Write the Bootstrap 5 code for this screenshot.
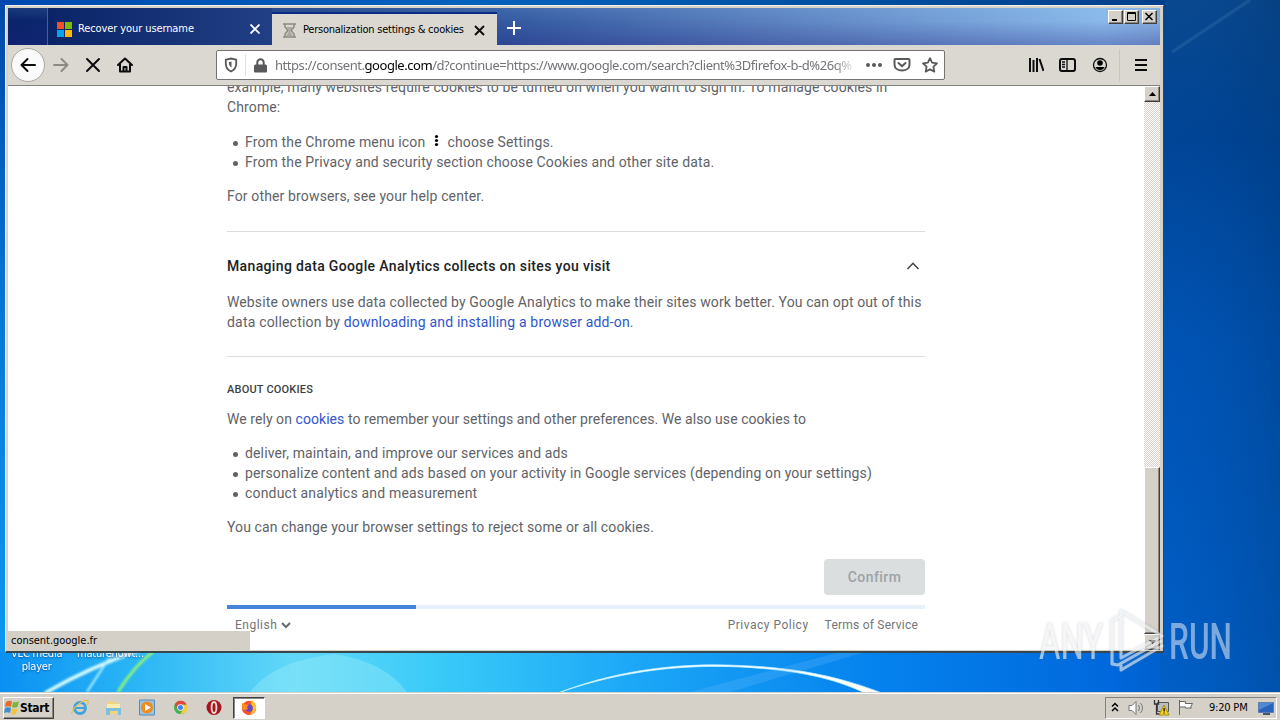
<!DOCTYPE html>
<html lang="en">
<head>
<meta charset="utf-8">
<meta name="viewport" content="width=device-width, initial-scale=1">
<title>Personalization settings &amp; cookies</title>
<link href="https://cdn.jsdelivr.net/npm/bootstrap@5.3.0/dist/css/bootstrap.min.css" rel="stylesheet">
<style>
html,body{height:100%}
body{width:1280px;height:720px;font-family:"DejaVu Sans Condensed","DejaVu Sans",sans-serif;font-size:11px;line-height:14px;color:#000;background:#0058c0}
svg{display:block;flex:none}
.desk{height:720px;padding:5px 0 0 5px}
.wall{left:0;top:0}
.win{width:1159px;height:648px;padding:2px 3px 3px 2px;border:1px solid #f4f2ea;border-right-color:#404040;border-bottom:2px solid #38474d;background:#d6d2c6}
.tabs{height:37px;background:linear-gradient(180deg,rgba(140,210,255,.12),rgba(120,170,230,0) 35%,rgba(30,30,125,.32)),linear-gradient(90deg,#0a246a 0,#12307a 15%,#2f549c 40%,#5a80be 65%,#8ab8ea 95%,#84acdf)}
.tab{height:37px;padding-top:5px}
.t1{width:225px;margin-left:39px;border-left:1px solid #4a5f98;padding-left:9px;color:#fff;background:linear-gradient(90deg,#0b2468,#213f85)}
.t2{width:225px;height:33px;margin-top:4px;border-top:2px solid #0a2a86;background:#dbd8d2;padding:1px 12px 0 11px}
.tabname{margin-left:6px;letter-spacing:-.1px}
.tabname2{margin-left:7px;letter-spacing:-.24px}
.wbtns{padding:2px 3px 0 0}
.bar{height:41px;background:#dbd8d2;border-bottom:1px solid #84827e;padding-left:3px}
.back{width:34px;height:34px;border:1px solid #a9a7a3;border-radius:50%;background:#fafafa}
.url{width:729px;height:30px;border:1px solid #75736f;background:#fff;border-radius:2px;font-family:"Noto Sans",sans-serif;font-size:13px;color:#737378}
.url b{font-weight:400;color:#000}
.url .addr{width:582px;line-height:22px;letter-spacing:-.45px;-webkit-mask-image:linear-gradient(90deg,#000 96%,transparent);mask-image:linear-gradient(90deg,#000 96%,transparent)}
.view{height:564px;background:#fff}
.doc{width:698px;margin-left:219px;font-family:Roboto,sans-serif;font-size:14px;line-height:20px;color:#5f6368;letter-spacing:.14px}
.doc p,.doc ul,.doc h2,.doc h3{margin:0;white-space:nowrap}
.doc ul{padding-left:18px;list-style:none;margin:15px 0 14px}
.doc li::before{content:"";position:absolute;width:5px;height:5px;border-radius:50%;background:#5f6368;margin:9px 0 0 -12px}
.doc a{color:#2f55cc;text-decoration:none}
.doc .ls-s{letter-spacing:.06px}
.doc .ls-m{letter-spacing:.12px}
.doc .ls-l{letter-spacing:.19px}
.rule{height:1px;background:#dadce0}
.doc h2{font-size:14px;line-height:20px;font-weight:500;color:#202124;letter-spacing:.35px}
.doc h3{font-size:11px;line-height:20px;font-weight:500;color:#3c4043;letter-spacing:.2px}
.doc .okay{width:101px;height:36px;border-radius:4px;border:0;background:#dadedf;color:#9da2a6;font-size:14px;font-weight:500;letter-spacing:.45px;padding:0;opacity:1}
.meter{height:4px;background:#e8f0fb;border-radius:0}
.foot{font-size:12px;letter-spacing:.5px;color:#757575;height:20px;margin-top:6px;padding:0 7px 0 8px}
.foot .tos{letter-spacing:.23px}
.sbar{width:16px;background:repeating-conic-gradient(#d4d0c8 0 25%,#fff 0 50%) 0 0/2px 2px}
.raised{background:#d5d1c9;border:1px solid #fff;border-right-color:#404040;border-bottom-color:#404040;box-shadow:inset -1px -1px 0 #8a8880}
.thumb{height:167px}
.ctl{width:15px;height:14px}
.status{left:8px;top:631px;width:242px;height:19px;background:#d4d0c8;padding:3px 0 0 3px;letter-spacing:-.03px}
.dlabel{color:#fff;top:647px;text-align:center;line-height:13px;letter-spacing:-.2px;text-shadow:0 1px 2px #0050a0}
.task{left:0;top:692px;width:1280px;height:28px;background:#d5d1c9;border-top:1px solid #d5d1c9;box-shadow:inset 0 1px 0 #fff;padding:3px 3px 1px}
.start{width:51px;height:22px;font-weight:700;font-size:12px;letter-spacing:-.35px}
.active-app{width:32px;height:22px;background:#fff;border:1px solid #404040;border-right-color:#fff;border-bottom-color:#fff;box-shadow:inset 1px 1px #888}
.tray{width:172px;height:22px;border:1px solid #84827e;border-right-color:#fff;border-bottom-color:#fff;letter-spacing:-.2px}
.wm{left:1030px;top:600px;z-index:5}
</style>
</head>
<body class="overflow-hidden">
<div class="desk position-relative">
<svg class="wall position-absolute" width="1280" height="720" viewBox="0 0 1280 720">
<defs>
<linearGradient id="h"><stop offset="0" stop-color="#0a90f2"/><stop offset=".1" stop-color="#28b4f5"/><stop offset=".23" stop-color="#62d8f8"/><stop offset=".34" stop-color="#3acbf8"/><stop offset=".5" stop-color="#1ba6f7"/><stop offset=".68" stop-color="#0583ee"/><stop offset=".87" stop-color="#0068dc"/><stop offset="1" stop-color="#004daa"/></linearGradient>
<linearGradient id="r" x2="0" y2="1"><stop offset="0" stop-color="#0b4585"/><stop offset=".2" stop-color="#00418f"/><stop offset=".5" stop-color="#0053b3"/><stop offset="1" stop-color="#0060c8"/></linearGradient>
<linearGradient id="rd"><stop offset="0" stop-color="#0058c0" stop-opacity=".15"/><stop offset="1" stop-color="#003c80" stop-opacity=".4"/></linearGradient>
<linearGradient id="l" x2="0" y2="1"><stop offset="0" stop-color="#0048a8"/><stop offset=".5" stop-color="#0878d8"/><stop offset="1" stop-color="#0a98f4"/></linearGradient>
<linearGradient id="t"><stop offset="0" stop-color="#0048b0"/><stop offset=".4" stop-color="#0562bd"/><stop offset="1" stop-color="#003f8a"/></linearGradient>
<filter id="soft"><feGaussianBlur stdDeviation="1.2"/></filter>
<filter id="soft2"><feGaussianBlur stdDeviation=".6"/></filter>
</defs>
<rect y="640" width="1280" height="80" fill="url(#h)"/>
<rect x="1160" width="120" height="692" fill="url(#r)"/><rect x="1160" width="120" height="692" fill="url(#rd)"/>
<rect width="6" height="652" fill="url(#l)"/><rect width="1165" height="6" fill="url(#t)"/>
<path d="M250 692Q275 660 335 654Q385 662 407 692Z" fill="#a4f0fa" opacity=".35"/>
<g fill="none" filter="url(#soft)"><path d="M45 693Q90 667 140 650" stroke="#d8fbff" stroke-width="3.500"/><path d="M87 692L113 652" stroke="#b8f4ff" stroke-width="2"/><path d="M118 692Q134 666 155 650" stroke="#8df27c" stroke-width="3"/><path d="M1172 52L1250 0" stroke="#4f86b8" stroke-width="2" opacity=".5"/></g>
<path d="M558 693C625 667 690 663 740 665.500C805 668 845 679 882 693L865 693C835 679 800 670 740 667C690 664.500 625 669 558 693Z" fill="#fff" stroke="#bdf0ff" stroke-width=".7" filter="url(#soft2)"/>
<path d="M690 692L840 652H865L730 692Z" fill="#7fc5ff" opacity=".2"/>
</svg>
<div class="dlabel position-absolute" style="left:11px">VLC media<br>player</div>
<div class="dlabel position-absolute" style="left:77px">maturehowt...</div>

<div class="win position-relative">
<div class="tabs d-flex">
<div class="tab t1 d-flex align-items-center">
<svg width="15" height="15" viewBox="0 0 15 15"><path fill="#f25022" d="M0 0h7v7H0z"/><path fill="#7fba00" d="M8 0h7v7H8z"/><path fill="#00a4ef" d="M0 8h7v7H0z"/><path fill="#ffb900" d="M8 8h7v7H8z"/></svg>
<span class="text-nowrap tabname">Recover your username</span>
<svg class="ms-auto" style="margin-right:12px" width="10" height="10" stroke="#fff" stroke-width="1.800"><path d="M.5 .5l9 9m0-9l-9 9"/></svg>
</div>
<div class="tab t2 d-flex align-items-center">
<svg width="13" height="15" viewBox="0 0 13 15" fill="none" stroke="#8b8985" stroke-width="1.500"><path d="M0 1h13M0 14h13M2 1v3l3 3.500L2 11v3M11 1v3L8 7.500 11 11v3"/><path d="M3 4h7L7.500 7v2l2.500 4H3l2.500-4V7z" fill="#aaa8a4" stroke="none"/></svg>
<span class="text-nowrap tabname2">Personalization settings &amp; cookies</span>
<svg class="ms-auto" width="11" height="11" stroke="#111" stroke-width="2"><path d="M1 1l9 9m0-9l-9 9"/></svg>
</div>
<svg class="mt-2 ms-1" width="28" height="25" stroke="#fff" stroke-width="2"><path d="M13 5v14M6 12h14"/></svg>
<div class="d-flex ms-auto wbtns">
<div class="raised ctl"><svg width="13" height="12"><path d="M3 8h5v2H3z"/></svg></div>
<div class="raised ctl" style="margin-left:1px"><svg width="13" height="12" fill="none" stroke="#000"><path d="M2.500 1.500h8v8h-8zM2 2.500h9"/></svg></div>
<div class="raised ctl" style="margin-left:3px"><svg width="13" height="12" stroke="#000" stroke-width="1.500"><path d="M2.500 2l7 7m0-7l-7 7"/></svg></div>
</div>
</div>
<div class="bar d-flex align-items-center">
<div class="back d-flex align-items-center justify-content-center"><svg width="16" height="16" fill="none" stroke="#0c0c0d" stroke-width="2" stroke-linecap="round" stroke-linejoin="round"><path d="M15 8H1.500M7.500 2l-6 6 6 6"/></svg></div>
<svg class="ms-2" width="16" height="16" fill="none" stroke="#8c8a87" stroke-width="2" stroke-linecap="round" stroke-linejoin="round"><path d="M1 8h13.500M8.500 2l6 6-6 6"/></svg>
<svg class="ms-3" width="16" height="16" stroke="#0c0c0d" stroke-width="2" stroke-linecap="round"><path d="M2 2l12 12m0-12L2 14"/></svg>
<svg class="ms-3" width="16" height="16" fill="none" stroke="#0c0c0d" stroke-width="2" stroke-linecap="round" stroke-linejoin="round"><path d="M1 8l7-6.500L15 8M3 7v7.500h10V7"/><path d="M6.500 14v-4h3v4" /></svg>
<div class="url d-flex align-items-center" style="margin-left:83px">
<svg style="margin-left:7px" width="14" height="16" fill="none" stroke="#59595c" stroke-width="1.800"><path d="M7 1.500l5.200 1.200v4C12.200 10.500 10 13 7 14.500 4 13 1.800 10.500 1.800 6.700v-4z"/><path d="M7.500 4.500v6C5.500 9 4.800 7.500 4.800 5.200z" fill="#59595c" stroke="none"/></svg>
<div class="border-start" style="height:22px;margin:0 8px 0 7px"></div>
<svg width="13" height="15" fill="#59595c"><path d="M0 8a1.500 1.500 0 011.500-1.500h10A1.500 1.500 0 0113 8v5.500a1 1 0 01-1 1H1a1 1 0 01-1-1z"/><path d="M3.300 8V4.500a3.200 3.200 0 016.400 0V8" fill="none" stroke="#59595c" stroke-width="2"/></svg>
<div class="addr overflow-hidden text-nowrap" style="margin-left:8px">https://consent.<b>google.com</b>/d?continue=https://www.google.com/search?client%3Dfirefox-b-d%26q%</div>
<svg style="margin-left:8px" width="18" height="6" fill="#59595c"><circle cx="3" cy="3" r="2"/><circle cx="9" cy="3" r="2"/><circle cx="15" cy="3" r="2"/></svg>
<svg style="margin-left:10px" width="18" height="16" fill="none" stroke="#59595c" stroke-width="2" stroke-linecap="round" stroke-linejoin="round"><path d="M2.500 2h13Q16.500 2 16.500 3v4.500c0 8-15 8-15 0V3q0-1 1-1z"/><path d="M5.500 6L9 9.300 12.500 6"/></svg>
<svg style="margin-left:11px" width="16" height="16" fill="none" stroke="#59595c" stroke-width="1.800" stroke-linejoin="round"><path d="M8 1.200l2.100 4.500 4.900.6-3.600 3.400.9 4.900L8 12.200l-4.300 2.400.9-4.900L1 6.300l4.900-.6z"/></svg>
</div>
<svg style="margin-left:83px" width="16" height="14" stroke="#0c0c0d" stroke-width="2"><path d="M2 0v14M5.500 2v12M9 0v14M11.500 1l4 12"/></svg>
<svg style="margin-left:15px" width="17" height="14" fill="none" stroke="#0c0c0d" stroke-width="2"><rect x="1" y="1" width="15" height="12" rx="2"/><path d="M8 1v12M3 4h3M3 6.500h3M3 9h3" stroke-width="1.300"/></svg>
<svg style="margin-left:16px" width="16" height="16" viewBox="0 0 16 16"><circle cx="8" cy="8" r="6.500" fill="none" stroke="#0c0c0d" stroke-width="1.300"/><circle cx="8" cy="6" r="2.800"/><path d="M3.500 10h9q-1 3-4.500 3T3.500 10z"/></svg>
<div style="margin-left:11px;width:1px;height:33px;background:#c9c6c0"></div>
<svg style="margin-left:15px" width="12" height="12" stroke="#0c0c0d" stroke-width="2"><path d="M0 1h12M0 6h12M0 11h12"/></svg>
</div>
<div class="view d-flex overflow-hidden">
<div class="doc">
<p style="margin-top:-9px" class="ls-m">example, many websites require cookies to be turned on when you want to sign in. To manage cookies in</p>
<p class="ls-m">Chrome:</p>
<ul><li>From the Chrome menu icon <svg class="d-inline-block align-baseline mx-1" width="7" height="13"><circle cx="3.500" cy="2.500" r="1.600"/><circle cx="3.500" cy="6.500" r="1.600"/><circle cx="3.500" cy="10.500" r="1.600"/></svg> choose Settings.</li><li>From the Privacy and security section choose Cookies and other site data.</li></ul>
<p>For other browsers, see your help center.</p>
<div class="rule" style="margin-top:25px"></div>
<div class="d-flex justify-content-between align-items-center mt-4"><h2>Managing data Google Analytics collects on sites you visit</h2><svg class="me-1" width="16" height="10" fill="none" stroke="#444746" stroke-width="1.600"><path d="M2.500 8L8 2.300 13.500 8"/></svg></div>
<p class="mt-3 ls-m">Website owners use data collected by Google Analytics to make their sites work better. You can opt out of this</p>
<p class="ls-l">data collection by <a href="#">downloading and installing a browser add-on</a>.</p>
<div class="rule mt-4"></div>
<h3 style="margin-top:23px">ABOUT COOKIES</h3>
<p style="margin-top:9px" class="ls-s">We rely on <a href="#">cookies</a> to remember your settings and other preferences. We also use cookies to</p>
<ul style="margin-top:14px"><li>deliver, maintain, and improve our services and ads</li><li>personalize content and ads based on your activity in Google services (depending on your settings)</li><li class="ls-l">conduct analytics and measurement</li></ul>
<p class="ls-m">You can change your browser settings to reject some or all cookies.</p>
<div class="d-flex justify-content-end" style="margin-top:22px"><button class="btn okay" disabled>Confirm</button></div>
<div class="meter" style="margin-top:10px"><div class="h-100" style="width:27.100%;background:#4586dc"></div></div>
<div class="foot d-flex align-items-center"><span>English</span><svg class="ms-1" width="10" height="8" fill="none" stroke="#66696c" stroke-width="2"><path d="M1 2l4 4 4-4"/></svg><span class="ms-auto">Privacy Policy</span><span class="ms-3 tos">Terms of Service</span></div>
</div>
<div class="sbar d-flex flex-column ms-auto">
<div class="raised" style="height:16px"><svg width="14" height="14"><path d="M4 9h7L7.500 5z"/></svg></div>
<div class="raised thumb mt-auto"></div>
<div class="raised" style="height:16px"><svg width="14" height="14"><path d="M4 5h7L7.500 9z"/></svg></div>
</div>
</div>
</div>
<div class="status position-absolute">consent.google.fr</div>
<div class="task position-absolute d-flex align-items-center">
<div class="raised start d-flex align-items-center"><svg width="16" height="17"><path d="M2 3q3-2 6-.5L7 8Q4 6.500 1 8z" fill="#e66b31"/><path d="M9 3q3 1 6-1l-1.500 6q-3 1.500-5.500 0z" fill="#75b83c"/><path d="M1 9q3-1.500 6 0l-1 5Q3 12.500 0 14z" fill="#3c8fd0"/><path d="M8 9.500q3 1.500 5.500 0L12 15q-3 1.500-5 0z" fill="#f4c33c"/></svg>Start</div>
<svg style="margin-left:17px" width="18" height="17" fill="none"><circle cx="9" cy="9" r="5.500" stroke="#3fa4dc" stroke-width="2.800"/><path d="M4 9h10" stroke="#3fa4dc" stroke-width="2"/><path d="M1 15C-1 11 13-1 17 2q1 1-1 4" stroke="#e8c04c" stroke-width="1.300"/></svg>
<svg style="margin-left:16px" width="17" height="17"><path d="M2 2h6l1 2h5v11H2z" fill="#f0d57a"/><path d="M2 5h13v5H2z" fill="#faecb0"/><path d="M1 9h15v7h-3v-4H5v4H1z" fill="#7fc1dd"/></svg>
<svg style="margin-left:17px" width="16" height="17"><path d="M.5 1h15v15H.5z" fill="#9ac4e4" stroke="#588cb8"/><circle cx="8" cy="8.500" r="6" fill="#f18b1d"/><path d="M6 5l6 3.500L6 12z" fill="#fff"/></svg>
<svg style="margin-left:18px" width="15" height="17" viewBox="0 0 16 16"><circle cx="8" cy="8" r="7" fill="#4aae52"/><path d="M2 4.500A7 7 0 0114.500 5H8l-3 5z" fill="#dd4a3a"/><path d="M15 5a7 7 0 01-7 10l3-6-1-4z" fill="#f6cd3e"/><circle cx="8" cy="8" r="3.500" fill="#fff"/><circle cx="8" cy="8" r="2.700" fill="#4285f4"/></svg>
<svg style="margin-left:18px" width="16" height="17"><circle cx="8" cy="8.500" r="7.500" fill="#a31620"/><ellipse cx="8" cy="8.500" rx="2.400" ry="5.500" fill="#a31620" stroke="#f3dada" stroke-width="1.800"/></svg>
<div class="active-app d-flex justify-content-center align-items-center" style="margin-left:11px"><svg width="16" height="17" viewBox="0 0 16 17"><circle cx="8" cy="9" r="7.200" fill="#f5562b"/><path d="M11 1q4 3 4.200 8Q14 15 8 16q5-4 3-8-2-3 0-7z" fill="#ffc329"/><circle cx="8" cy="9" r="3.800" fill="#6a45c8"/><path d="M1 4l3 1 4 1-2 2 1 2-3 1-3-1z" fill="#ff8b20"/></svg></div>
<div class="tray ms-auto d-flex align-items-center">
<svg style="margin-left:5px" width="8" height="11" fill="none" stroke="#000" stroke-width="1.500"><path d="M1 4.500L4 1.500l3 3M1 9l3-3 3 3"/></svg>
<svg style="margin-left:9px" width="17" height="16" fill="#fff" stroke="#777" ><path d="M1 5.500h3l4-4v13l-4-4H1z"/><path d="M10.500 5q2 3 0 6M12.500 3q4 5 0 10" fill="none"/></svg>
<svg style="margin-left:8px" width="17" height="17"><path d="M4.500 3.500h11v9h-11z" fill="#b9bec0" stroke="#555"/><path d="M1.500 1v4h4V1M3.500 5v10h4" fill="none" stroke="#333" stroke-width="1.300"/><path d="M11 6l5 10H6z" fill="#f8d321" stroke="#a78a15"/><path d="M10.500 9h1.200v3.500h-1.200zM10.500 13.500h1.200v1h-1.200z"/></svg>
<svg style="margin-left:7px" width="17" height="17" fill="#fff" stroke="#666"><path d="M2.500 1v15M2.500 2.500h6v2h7l-2 3.500 1 1h-6v-1h-6z"/></svg>
<span class="text-nowrap" style="margin-left:15px">9:20 PM</span>
<svg style="margin:0 1px 0 auto" width="17" height="14"><path d="M.5 1.500h15v10H.5z" fill="#2a63bb" stroke="#607fae"/><path d="M1 2h14L1 9z" fill="#5089d4"/><path d="M5 12h7v2H5z" fill="#44556e"/></svg>
</div>
</div>
<svg class="wm position-absolute" width="210" height="80" viewBox="0 0 210 80" opacity=".65">
<defs><filter id="sh" x="-20%" y="-20%" width="140%" height="140%"><feDropShadow dx="0" dy="0" stdDeviation="1.600" flood-color="#777" flood-opacity=".5"/></filter></defs>
<g fill="#eef1f5" filter="url(#sh)" font-family="Roboto" font-size="50" font-weight="400"><text x="9" y="59" textLength="64" lengthAdjust="spacingAndGlyphs">ANY</text></g>
<g fill="#c0d5ef" font-family="Roboto" font-size="50" font-weight="500"><text x="139" y="59" textLength="63" lengthAdjust="spacingAndGlyphs">RUN</text></g>
<g fill="none" stroke="#eaeef3" stroke-width="3" stroke-linejoin="round" stroke-linecap="round" filter="url(#sh)"><path d="M91 11L132 36 91 58ZM91 16L82 20V64L88 65 131 41M91 70L132 46M91 70V65"/></g>
</svg>
</div>
<script src="https://cdn.jsdelivr.net/npm/bootstrap@5.3.0/dist/js/bootstrap.bundle.min.js"></script>
</body>
</html>
